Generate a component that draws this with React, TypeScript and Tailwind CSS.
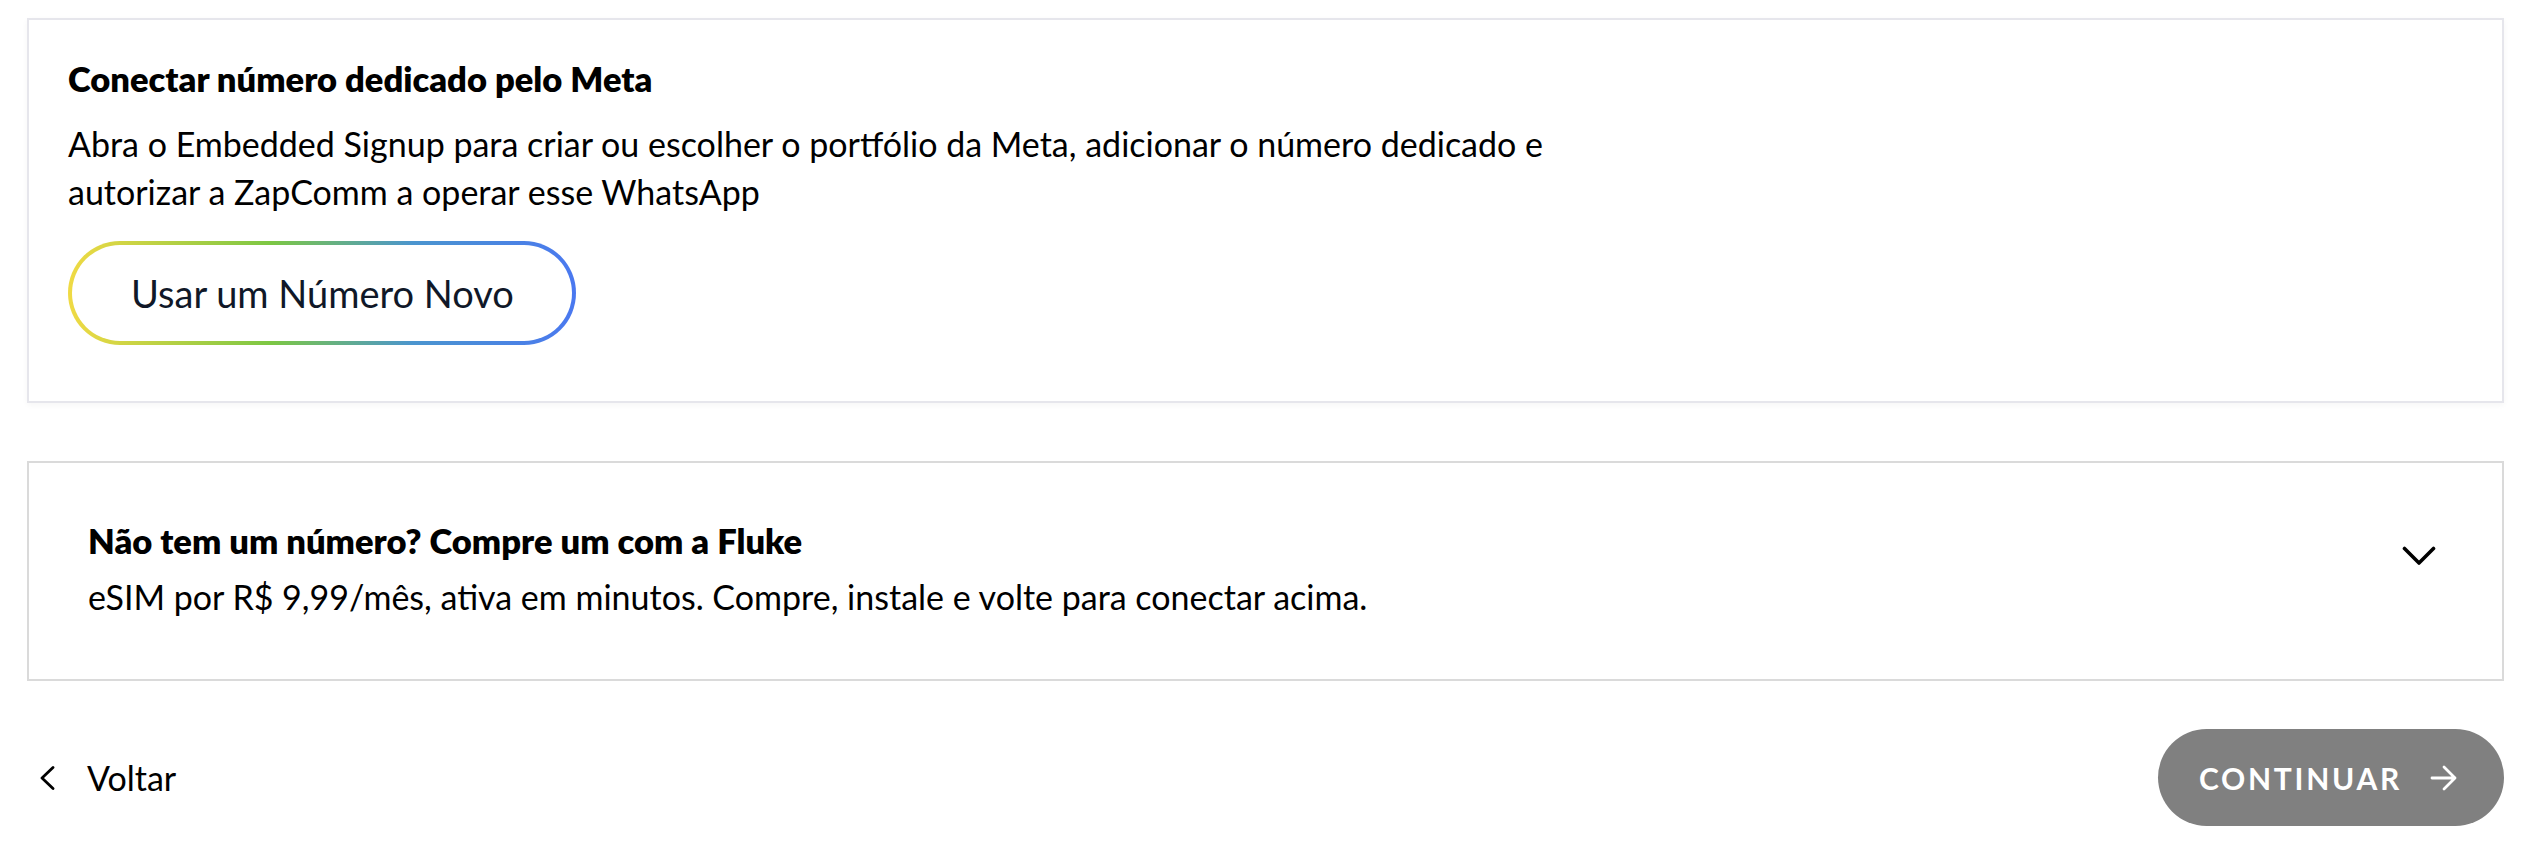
import React from "react";

export default function App() {
  return (
    <div className="w-[2530px] h-[852px] bg-white pl-[27px] pr-[26px] pt-[18px] text-black font-['Lato','Noto_Sans',sans-serif]">
      {/* Card 1 */}
      <div className="border-2 border-[#e6e6ec] shadow-[0_2px_6px_rgba(0,0,0,0.04)] pl-[39px] pt-[39px] pb-[56px]">
        <h2 className="text-[34.5px] leading-[40px] font-extrabold">Conectar número dedicado pelo Meta</h2>
        <p className="mt-[21px] text-[34px] leading-[48px] font-normal w-[1600px]">
          Abra o Embedded Signup para criar ou escolher o portfólio da Meta, adicionar o número dedicado e
          <br />
          autorizar a ZapComm a operar esse WhatsApp
        </p>
        <div className="mt-[25px] w-[508px] h-[104px] rounded-full p-[4px] bg-[linear-gradient(90deg,#f0da44_0%,#7cc744_40%,#4b95cf_68%,#4a78f0_100%)]">
          <div className="w-full h-full rounded-full bg-white flex items-center pl-[59px]">
            <span className="text-[38px] leading-none text-[#101828]">Usar um Número Novo</span>
          </div>
        </div>
      </div>

      {/* Card 2 */}
      <div className="mt-[58px] border-2 border-[#dadada] pl-[59px] pr-[66px] pt-[58px] pb-[58px] flex items-start justify-between">
        <div>
          <h3 className="text-[34.5px] leading-[40px] font-extrabold">Não tem um número? Compre um com a Fluke</h3>
          <p className="mt-[12px] text-[34px] leading-[48px] font-normal">
            eSIM por R$ 9,99/mês, ativa em minutos. Compre, instale e volte para conectar acima.
          </p>
        </div>
        <svg width="34" height="21" viewBox="0 0 34 21" className="mt-[25px]" fill="none">
          <polyline points="2.5,2.5 17,17 31.5,2.5" stroke="#000" strokeWidth="3.6" strokeLinecap="round" strokeLinejoin="round" />
        </svg>
      </div>

      {/* Footer */}
      <div className="mt-[48px] flex items-center justify-between">
        <div className="flex items-center pl-[12px] gap-[32px]">
          <svg width="16" height="24" viewBox="0 0 16 24" fill="none">
            <polyline points="14,1.5 3,12 14,22.5" stroke="#000" strokeWidth="2.8" strokeLinecap="round" strokeLinejoin="round" />
          </svg>
          <span className="text-[34px] leading-none">Voltar</span>
        </div>
        <button className="w-[346px] h-[97px] rounded-full bg-[#808080] flex items-center pl-[41px] gap-[28px]">
          <span className="text-[30px] leading-none font-bold tracking-[0.09em] text-white">CONTINUAR</span>
          <svg width="28" height="26" viewBox="0 0 28 26" fill="none">
            <path d="M2 13 H25 M14 2 L25 13 L14 24" stroke="#fff" strokeWidth="2.8" strokeLinecap="round" strokeLinejoin="round" />
          </svg>
        </button>
      </div>
    </div>
  );
}
